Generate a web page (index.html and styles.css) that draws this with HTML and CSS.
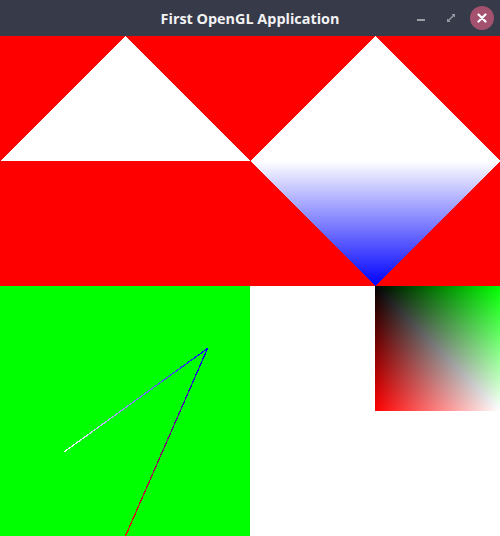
FILE: index.html
```html
<!DOCTYPE html>
<html>
<head>
<meta charset="utf-8">
<link rel="stylesheet" href="styles.css">
</head>
<body>
<div class="window">
  <header class="titlebar">
    <span class="spacer"></span>
    <h1 class="title">First OpenGL Application</h1>
    <div class="controls">
      <button class="ctl minimize" aria-label="Minimize">
        <svg width="10" height="10" viewBox="0 0 10 10"><rect x="1" y="6" width="8" height="2" fill="#9c9ea7"/></svg>
      </button>
      <button class="ctl maximize" aria-label="Maximize">
        <svg width="10" height="10" viewBox="0 0 10 10"><path d="M5.5 1H9V4.5L7.7 3.2 3.2 7.7 4.5 9H1V5.5L2.3 6.8 6.8 2.3Z" fill="#9c9ea7"/></svg>
      </button>
      <button class="ctl close" aria-label="Close">
        <svg width="10" height="10" viewBox="0 0 10 10"><path d="M1.5 1.5L8.5 8.5M8.5 1.5L1.5 8.5" stroke="#fff" stroke-width="2.2" stroke-linecap="round"/></svg>
      </button>
    </div>
  </header>
  <main class="viewport">
    <svg class="quad" width="250" height="250" viewBox="0 0 250 250">
      <rect width="250" height="250" fill="#ff0000"/>
      <polygon points="0,125 250,125 125,0" fill="#ffffff"/>
    </svg>
    <svg class="quad" width="250" height="250" viewBox="0 0 250 250">
      <defs>
        <linearGradient id="wb" x1="0" y1="125" x2="0" y2="250" gradientUnits="userSpaceOnUse">
          <stop offset="0" stop-color="#ffffff"/>
          <stop offset="1" stop-color="#0000ff"/>
        </linearGradient>
      </defs>
      <rect width="250" height="250" fill="#ff0000"/>
      <polygon points="125,0 250,125 0,125" fill="#ffffff"/>
      <polygon points="0,125 250,125 125,250" fill="url(#wb)"/>
    </svg>
    <svg class="quad" width="250" height="250" viewBox="0 0 250 250">
      <defs>
        <linearGradient id="l1" x1="64" y1="166" x2="207.5" y2="62.5" gradientUnits="userSpaceOnUse">
          <stop offset="0" stop-color="#ffffff"/>
          <stop offset="1" stop-color="#0000ff"/>
        </linearGradient>
        <linearGradient id="l2" x1="207.5" y1="62.5" x2="125.5" y2="250" gradientUnits="userSpaceOnUse">
          <stop offset="0" stop-color="#0000ff"/>
          <stop offset="1" stop-color="#ff0000"/>
        </linearGradient>
      </defs>
      <rect width="250" height="250" fill="#00ff00"/>
      <line x1="64" y1="166" x2="207.5" y2="62.5" stroke="url(#l1)" stroke-width="1.2"/>
      <line x1="207.5" y1="62.5" x2="125.5" y2="250" stroke="url(#l2)" stroke-width="1.2"/>
    </svg>
    <svg class="quad" width="250" height="250" viewBox="0 0 250 250">
      <defs>
        <linearGradient id="vm" x1="0" y1="0" x2="0" y2="125" gradientUnits="userSpaceOnUse">
          <stop offset="0" stop-color="#000000"/>
          <stop offset="1" stop-color="#ff00ff"/>
        </linearGradient>
        <linearGradient id="vr" x1="0" y1="0" x2="0" y2="125" gradientUnits="userSpaceOnUse">
          <stop offset="0" stop-color="#000000"/>
          <stop offset="1" stop-color="#ff0000"/>
        </linearGradient>
        <linearGradient id="hg" x1="125" y1="0" x2="250" y2="0" gradientUnits="userSpaceOnUse">
          <stop offset="0" stop-color="#000000"/>
          <stop offset="1" stop-color="#00ff00"/>
        </linearGradient>
        <linearGradient id="hc" x1="125" y1="0" x2="250" y2="0" gradientUnits="userSpaceOnUse">
          <stop offset="0" stop-color="#000000"/>
          <stop offset="1" stop-color="#00ffff"/>
        </linearGradient>
      </defs>
      <rect width="250" height="250" fill="#ffffff"/>
      <g class="square">
        <rect x="125" y="0" width="125" height="125" fill="url(#vm)"/>
        <rect class="screen" x="125" y="0" width="125" height="125" fill="url(#hg)"/>
      </g>
      <g class="square">
        <polygon points="125,0 125,125 250,125" fill="url(#vr)"/>
        <polygon class="screen" points="125,0 125,125 250,125" fill="url(#hc)"/>
      </g>
    </svg>
  </main>
</div>
</body>
</html>
```

FILE: styles.css
```css
html, body {
  margin: 0;
  padding: 0;
  background: #ffffff;
}

.window {
  width: 500px;
  height: 536px;
  display: flex;
  flex-direction: column;
}

.titlebar {
  height: 36px;
  flex: 0 0 36px;
  background: #373a48;
  display: grid;
  grid-template-columns: 1fr auto 1fr;
  align-items: center;
}

.title {
  margin: 0;
  font-family: "Open Sans", "Noto Sans", sans-serif;
  font-weight: 700;
  font-size: 14.4px;
  color: #f2f2f4;
  letter-spacing: 0;
  white-space: nowrap;
}

.controls {
  justify-self: end;
  display: flex;
  align-items: center;
  gap: 8px;
  padding-right: 6px;
}

.ctl {
  border: 0;
  padding: 0;
  margin: 0;
  background: transparent;
  width: 22px;
  height: 24px;
  display: flex;
  align-items: center;
  justify-content: center;
}

.ctl svg {
  display: block;
}

.close {
  width: 24px;
  height: 24px;
  border-radius: 50%;
  background: #a4506f;
}

.viewport {
  display: grid;
  grid-template-columns: 250px 250px;
  grid-template-rows: 250px 250px;
  height: 500px;
}

.quad {
  display: block;
}

.quad line,
.quad polygon {
  shape-rendering: crispEdges;
}

.square {
  isolation: isolate;
}

.screen {
  mix-blend-mode: screen;
}
```
